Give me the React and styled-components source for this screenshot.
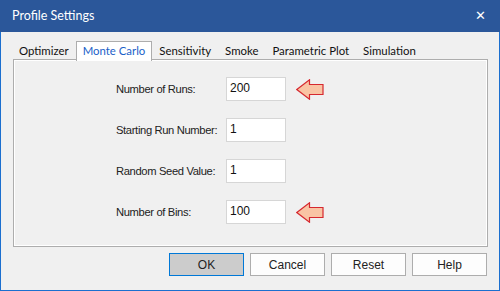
import React from 'react';
import styled, { createGlobalStyle } from 'styled-components';

const Global = createGlobalStyle`
  html, body { margin: 0; padding: 0; background: #f0f0f0; }
  #root { width: 500px; height: 291px; }
`;

const Window = styled.div`
  width: 500px;
  height: 291px;
  box-sizing: border-box;
  border: 1px solid #1b6fcf;
  border-top: none;
  background: #f0f0f0;
  display: flex;
  flex-direction: column;
  font-family: Lato, "Noto Sans", sans-serif;
`;

const TitleBar = styled.div`
  height: 31px;
  margin: 0 -1px;
  background: #2b579a;
  color: #fff;
  display: flex;
  align-items: center;
  justify-content: space-between;
  padding: 0 14px 1px 12px;
  font-size: 12.5px;
`;

const Close = styled.span`
  font-size: 13px;
  line-height: 1;
  font-family: "DejaVu Sans", sans-serif;
`;

const Body = styled.div`
  flex: 1;
  display: flex;
  flex-direction: column;
  padding: 9px 11px 0 11px;
`;

const TabBar = styled.div`
  display: flex;
  height: 19px;
`;

const Tab = styled.div`
  box-sizing: border-box;
  height: ${p => (p.active ? '20px' : '19px')};
  padding: 0 6px;
  font-size: 11.4px;
  line-height: 18px;
  color: ${p => (p.active ? '#1a5fc8' : '#111')};
  background: ${p => (p.active ? '#fff' : 'transparent')};
  border: 1px solid ${p => (p.active ? '#adadad' : 'transparent')};
  border-bottom: none;
  position: relative;
  z-index: 1;
  white-space: nowrap;
`;

const Panel = styled.div`
  height: 188px;
  box-sizing: border-box;
  margin-left: 1px;
  border: 1px solid #adadad;
  box-shadow: inset 1px 1px 0 #fff, inset -1px -1px 0 #fff;
  margin-top: -1px;
  padding: 17px 0 0 102px;
  display: grid;
  grid-template-columns: 110px 60px 10px 28px;
  grid-auto-rows: 24px;
  row-gap: 17px;
  align-items: center;
`;

const Label = styled.div`
  grid-column: 1;
  font-family: "Liberation Sans", Arial, sans-serif;
  font-size: 11.2px;
  letter-spacing: -0.35px;
  color: #222;
`;

const Field = styled.div`
  grid-column: 2;
  box-sizing: border-box;
  height: 24px;
  background: #fff;
  border: 1px solid #d6d6d6;
  padding: 3px 0 0 3px;
  font-family: "Liberation Sans", Arial, sans-serif;
  font-size: 12px;
  color: #111;
`;

const Arrow = styled.svg`
  grid-column: 4;
  width: 28px;
  height: 21px;
  display: block;
`;

const Footer = styled.div`
  display: flex;
  justify-content: flex-end;
  gap: 6px;
  padding: 6px 1px 0 0;
`;

const Button = styled.div`
  box-sizing: border-box;
  width: 75px;
  height: 23px;
  display: flex;
  align-items: center;
  justify-content: center;
  font-family: "Liberation Sans", Arial, sans-serif;
  font-size: 12px;
  color: #222;
  background: ${p => (p.primary ? '#cccccc' : '#fdfdfd')};
  border: 1px solid ${p => (p.primary ? '#0078d7' : '#adadad')};
`;

const PointArrow = () => (
  <Arrow viewBox="0 0 28 21">
    <path
      d="M0.8 10.5 L13.5 0.8 L13.5 5.5 L27 5.5 L27 15.5 L13.5 15.5 L13.5 20.2 Z"
      fill="#f9c4a4"
      stroke="#d6282f"
      strokeWidth="1.2"
      strokeLinejoin="miter"
    />
  </Arrow>
);

const rows = [
  { label: 'Number of Runs:', value: '200', arrow: true },
  { label: 'Starting Run Number:', value: '1' },
  { label: 'Random Seed Value:', value: '1' },
  { label: 'Number of Bins:', value: '100', arrow: true },
];

const tabs = ['Optimizer', 'Monte Carlo', 'Sensitivity', 'Smoke', 'Parametric Plot', 'Simulation'];

export default function App() {
  return (
    <Window>
      <Global />
      <TitleBar>
        <span>Profile Settings</span>
        <Close>✕</Close>
      </TitleBar>
      <Body>
        <TabBar>
          {tabs.map(t => (
            <Tab key={t} active={t === 'Monte Carlo'}>{t}</Tab>
          ))}
        </TabBar>
        <Panel>
          {rows.map(r => (
            <React.Fragment key={r.label}>
              <Label>{r.label}</Label>
              <Field>{r.value}</Field>
              {r.arrow && <PointArrow />}
            </React.Fragment>
          ))}
        </Panel>
        <Footer>
          <Button primary>OK</Button>
          <Button>Cancel</Button>
          <Button>Reset</Button>
          <Button>Help</Button>
        </Footer>
      </Body>
    </Window>
  );
}
